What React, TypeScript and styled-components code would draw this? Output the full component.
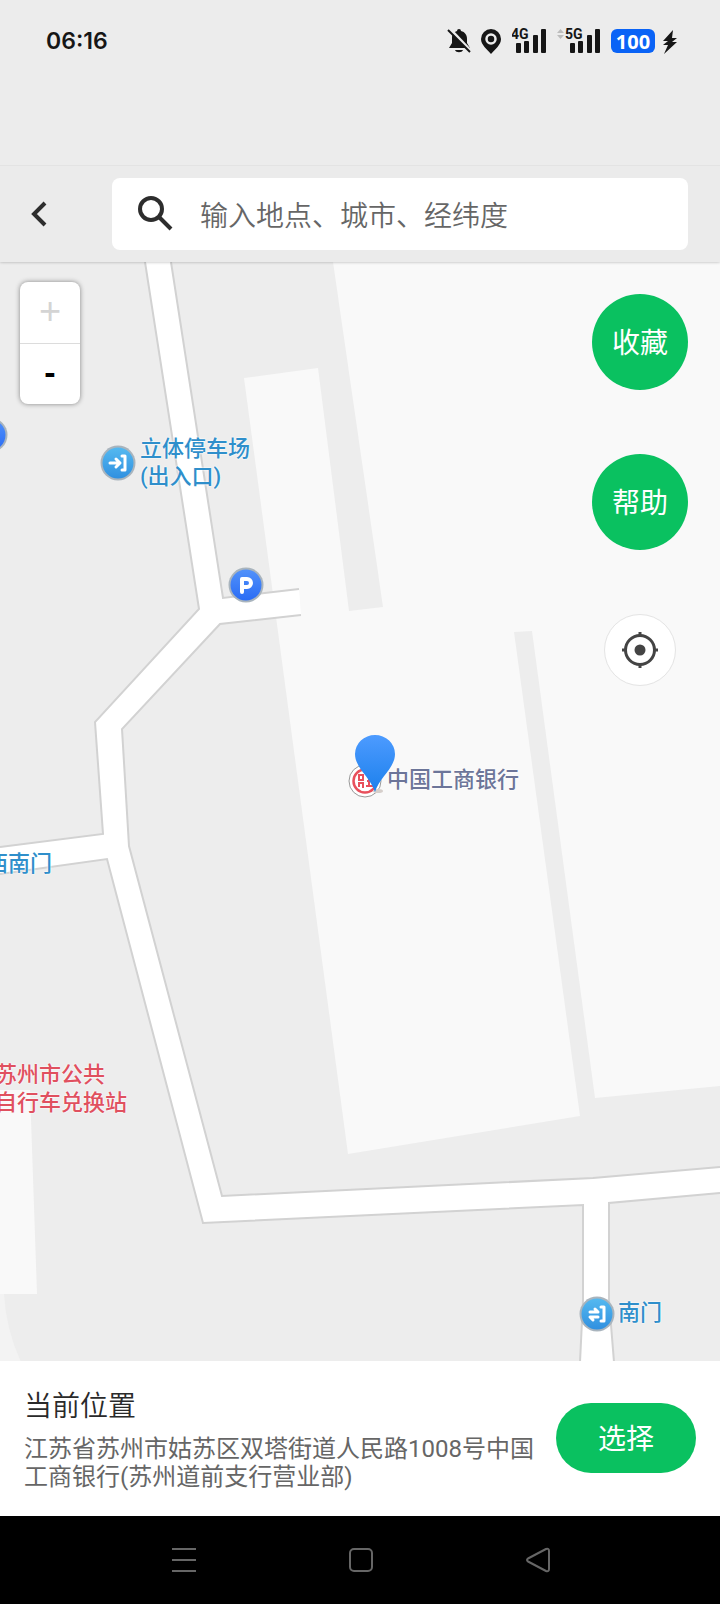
import React from "react";
import styled, { createGlobalStyle } from "styled-components";

const GlobalStyle = createGlobalStyle`
  * { box-sizing: border-box; }
  body {
    margin: 0;
    background: #ececec;
    font-family: Roboto, "Noto Sans CJK SC", sans-serif;
    -webkit-font-smoothing: antialiased;
  }
  button { font: inherit; border: 0; padding: 0; cursor: pointer; }
  svg { display: block; flex: none; }
`;

const Screen = styled.div`
  display: flex;
  flex-direction: column;
  min-height: 100vh;
`;

const StatusBar = styled.div`
  display: flex;
  justify-content: space-between;
  align-items: flex-start;
  height: 165px;
  padding: 24px 42px 0 46px;
  color: #161616;
`;

const Clock = styled.time`
  font: 600 23px/34px Inter, sans-serif;
`;

const StatusIcons = styled.div`
  display: flex;
  align-items: center;
  gap: 8px;
  height: 34px;
`;

const Battery = styled.span`
  width: 44px;
  height: 24px;
  border-radius: 6px;
  background: #0a63f6;
  color: #fff;
  text-align: center;
  font: 700 20px/26px "Open Sans", sans-serif;
`;

const Header = styled.header`
  position: relative;
  z-index: 1;
  display: flex;
  align-items: center;
  height: 97px;
  padding: 0 32px 0 20px;
  gap: 52px;
  background: #ebebeb;
  border-top: 1px solid #e3e3e3;
  box-shadow: 0 0 3px rgba(0, 0, 0, 0.3);
  clip-path: inset(0 0 -4px 0);
`;

const BackButton = styled.button`
  display: flex;
  align-items: center;
  justify-content: center;
  width: 40px;
  height: 40px;
  background: none;
`;

const SearchBox = styled.label`
  display: flex;
  flex: 1;
  align-items: center;
  gap: 24px;
  height: 72px;
  padding: 0 24px;
  border-radius: 8px;
  background: #fff;
`;

const SearchInput = styled.input`
  flex: 1;
  min-width: 0;
  height: 44px;
  padding: 4px 0 0;
  border: 0;
  outline: 0;
  background: none;
  color: #333;
  font: 350 28px/40px Roboto, "Noto Sans CJK SC", sans-serif;
  &::placeholder { color: #666; opacity: 1; }
`;

const MapArea = styled.main`
  position: relative;
  flex: 1;
  min-height: 1000px;
  overflow: hidden;
  background: #ededed;
`;

const MapDrawing = styled.svg`
  width: 100%;
  height: 100%;
  position: absolute;
  inset: 0;
`;

const Label = styled.div<{ $x: number; $y: number; $color: string }>`
  position: absolute;
  left: ${(p) => p.$x}px;
  top: ${(p) => p.$y}px;
  color: ${(p) => p.$color};
  font-size: 22px;
  font-weight: 500;
  line-height: 28px;
  white-space: nowrap;
  text-shadow: 0 0 2px #fff, 0 0 2px #fff;
`;

const ZoomControl = styled.div`
  position: absolute;
  left: 20px;
  top: 20px;
  display: flex;
  flex-direction: column;
  width: 60px;
  border-radius: 8px;
  background: #fff;
  box-shadow: 0 0 5px rgba(0, 0, 0, 0.45);
`;

const ZoomButton = styled.button`
  height: 61px;
  background: none;
  color: #000;
  font: 700 34px/56px "Liberation Sans", sans-serif;
  padding-bottom: 4px;
  & + & { border-top: 1px solid #dcdcdc; }
  &:disabled { color: #d4d4d4; font-size: 38px; font-weight: 400; }
`;

const MapActions = styled.div`
  position: absolute;
  right: 32px;
  top: 32px;
  display: flex;
  flex-direction: column;
  align-items: center;
  gap: 64px;
`;

const RoundButton = styled.button`
  width: 96px;
  height: 96px;
  padding-top: 4px;
  border-radius: 50%;
  background: #0ac160;
  color: #fff;
  font-size: 28px;
  line-height: 40px;
`;

const LocateButton = styled.button`
  display: flex;
  align-items: center;
  justify-content: center;
  width: 72px;
  height: 72px;
  border: 1px solid #e4e4e4;
  border-radius: 50%;
  background: #fff;
`;

const PlacePanel = styled.section`
  display: flex;
  align-items: center;
  gap: 20px;
  padding: 24px 24px 25px;
  background: #fff;
`;

const PlaceText = styled.div`
  display: flex;
  flex: 1;
  flex-direction: column;
  gap: 6px;
  min-width: 0;
`;

const PlaceTitle = styled.h1`
  margin: 0;
  color: #2a2a2a;
  font-size: 28px;
  font-weight: 350;
  line-height: 44px;
`;

const PlaceAddress = styled.p`
  margin: 0;
  color: #666;
  font-size: 24px;
  font-weight: 400;
  line-height: 28px;
`;

const SelectButton = styled.button`
  width: 140px;
  height: 70px;
  padding-top: 4px;
  border-radius: 35px;
  background: #0ac160;
  color: #fff;
  font-size: 28px;
  line-height: 40px;
`;

const SystemNav = styled.nav`
  display: flex;
  height: 88px;
  padding: 0 93px 0 95px;
  background: #000;
`;

const NavButton = styled.button`
  display: flex;
  flex: 1;
  align-items: center;
  justify-content: center;
  background: none;
`;

function Signal({ name, roaming }: { name: string; roaming?: boolean }) {
  const x = roaming ? 9 : 0;
  return (
    <svg width={roaming ? 46 : 37} height="28" viewBox={`0 0 ${roaming ? 46 : 37} 28`} fill="#161616">
      {roaming && <path d="M0 6 3.500 2 7 6ZM0 8h7l-3.500 4Z" fill="#bdbdbd" />}
      <text x={x - 1} y="12" fontFamily="Roboto, sans-serif" fontSize="14" fontWeight="700">{name}</text>
      <rect x={x + 4} y="16" width="5" height="10" rx="1" />
      <rect x={x + 12} y="14" width="5" height="12" rx="1" />
      <rect x={x + 21} y="8" width="5" height="18" rx="1" />
      <rect x={x + 29} y="2" width="5" height="24" rx="1" />
    </svg>
  );
}

type MarkerProps = { x: number; y: number; fill: string; children?: React.ReactNode };

function Marker({ x, y, fill, children }: MarkerProps) {
  return (
    <g transform={`translate(${x} ${y})`}>
      <circle r="17.500" fill="#a9b4bd" />
      <circle r="15.500" fill={`url(#${fill})`} />
      <g fill="none" stroke="#fff" strokeWidth="3" strokeLinecap="round" strokeLinejoin="round">{children}</g>
    </g>
  );
}

function CampusMap() {
  return (
    <MapDrawing viewBox="0 262 720 1099" preserveAspectRatio="xMinYMin slice" aria-hidden="true">
      <defs>
        <linearGradient id="gate" x2="0" y2="1"><stop stopColor="#55b9f0" /><stop offset="1" stopColor="#3090e0" /></linearGradient>
        <linearGradient id="parking" x2="0" y2="1"><stop stopColor="#5292fa" /><stop offset="1" stopColor="#2a6cf5" /></linearGradient>
        <linearGradient id="pin" x2="0" y2="1"><stop stopColor="#4d9bff" /><stop offset="1" stopColor="#1c80ec" /></linearGradient>
      </defs>

      <g fill="#f9f9f9">
        <path d="M333 262 383 607 349 611 318 368 244 378 348 1154 580 1116 514 632 532 631 595 1098 720 1086V262Z" />
        <path d="M0 1090H30L37 1294H0Z" />
      </g>
      <path d="M0 1294H4Q6 1330 21 1362H0Z" fill="#f3f3f3" />

      <path
        fill="#fff"
        d="M145 262H171L223 598 299 589 301 615 220 624 122 729 129 846 222 1196 593 1178 720 1167V1193L609 1203V1300L614 1362H580L583 1300V1205L203 1223 107 859 0 874V847L103 834 95 722 199 609Z"
      />
      <g fill="none" stroke="#d2d2d2" strokeWidth="2">
        <path d="M171 262 223 598 299 589" />
        <path d="M301 615 220 624 122 729 129 846 222 1196 593 1178 720 1167" />
        <path d="M720 1193 609 1203V1300L614 1362" />
        <path d="M580 1362 583 1300V1205L203 1223 107 859 0 874" />
        <path d="M0 847 103 834 95 722 199 609 145 262" />
      </g>

      <Marker x={-10} y={435} fill="parking" />
      <Marker x={118} y={463} fill="gate">
        <path d="M-8 0H1M-2 -4 2 0-2 4M4-7H7V7H4" />
      </Marker>
      <Marker x={246} y={585} fill="parking">
        <path d="M-4 7V-6H1A4 4 0 0 1 1 2H-3" strokeWidth="4" />
      </Marker>
      <Marker x={597} y={1314} fill="gate">
        <path d="M-7-2H1L-2-5M1 3H-7L-4 6M4-7H7V7H4" />
      </Marker>

      <g transform="translate(365 781)">
        <circle r="16" fill="#fff" stroke="#999" />
        <g fill="none" stroke="#e8505c">
          <circle r="11.500" strokeWidth="2.500" />
          <path d="M-1-6H-6V-1H-2V-6M-7 2H-2V7M-6 6V2M2-6H7M4-6V5M1 5H8M2 0H7" strokeWidth="2" />
        </g>
      </g>
      <ellipse cx="378" cy="791" rx="5" ry="2" fill="#d6cfcb" />
      <path d="M375 792C371 778 355 768 355 754A20 19 0 0 1 395 754C395 768 379 778 375 792Z" fill="url(#pin)" />
    </MapDrawing>
  );
}

export default function App() {
  return (
    <>
      <GlobalStyle />
      <Screen>
        <StatusBar>
          <Clock>06:16</Clock>
          <StatusIcons>
            <svg width="26" height="28" viewBox="0 0 26 28" fill="#161616">
              <path d="M13 2a2 2 0 0 1 2 2c4 1 6 4 6 8v4l3 5H3l3-5v-5c0-4 2-6 5-7a2 2 0 0 1 2-2ZM9 23h8c-1 3-7 3-8 0Z" />
              <path d="m3 1 22 23" stroke="#ececec" strokeWidth="3" />
              <path d="m2 3 22 22" stroke="#161616" strokeWidth="2" />
            </svg>
            <svg width="24" height="28" viewBox="0 0 24 28">
              <path d="M11 2A10 10 0 0 1 21 12C21 18 15 22 11 27 7 22 1 18 1 12A10 10 0 0 1 11 2Z" fill="#161616" />
              <circle cx="11" cy="12" r="4.500" fill="#161616" stroke="#ececec" strokeWidth="2.500" />
            </svg>
            <Signal name="4G" />
            <Signal name="5G" roaming />
            <Battery>100</Battery>
            <svg width="15" height="26" viewBox="0 0 15 26" fill="#161616">
              <path d="M10 2 0 13H5L0 17H5L1 26 14 14H9L14 10H9Z" />
            </svg>
          </StatusIcons>
        </StatusBar>

        <Header>
          <BackButton aria-label="返回">
            <svg width="18" height="26" viewBox="0 0 18 26" fill="none" stroke="#2d2d2d" strokeWidth="4">
              <path d="M14 2 3 13 14 24" />
            </svg>
          </BackButton>
          <SearchBox>
            <svg width="40" height="40" viewBox="0 0 40 40" fill="none" stroke="#2d2d2d" strokeWidth="4">
              <circle cx="15" cy="15" r="11" />
              <path d="m23 23 12 12" />
            </svg>
            <SearchInput type="text" aria-label="搜索" placeholder="输入地点、城市、经纬度" />
          </SearchBox>
        </Header>

        <MapArea>
          <CampusMap />
          <Label $x={140} $y={173} $color="#2f8fcb">立体停车场<br />(出入口)</Label>
          <Label $x={387} $y={504} $color="#6c7599">中国工商银行</Label>
          <Label $x={-14} $y={588} $color="#2f8fcb">西南门</Label>
          <Label $x={-5} $y={799} $color="#e0505f">苏州市公共<br />自行车兑换站</Label>
          <Label $x={618} $y={1037} $color="#2f8fcb">南门</Label>
          <ZoomControl>
            <ZoomButton disabled aria-label="放大">+</ZoomButton>
            <ZoomButton aria-label="缩小">-</ZoomButton>
          </ZoomControl>
          <MapActions>
            <RoundButton>收藏</RoundButton>
            <RoundButton>帮助</RoundButton>
            <LocateButton aria-label="定位">
              <svg width="38" height="38" viewBox="0 0 38 38" fill="none" stroke="#444" strokeWidth="3">
                <circle cx="19" cy="19" r="14.500" />
                <circle cx="19" cy="19" r="5.500" fill="#444" stroke="none" />
                <path d="M19 1V6M19 32V37M1 19H6M32 19H37" />
              </svg>
            </LocateButton>
          </MapActions>
        </MapArea>

        <PlacePanel>
          <PlaceText>
            <PlaceTitle>当前位置</PlaceTitle>
            <PlaceAddress>江苏省苏州市姑苏区双塔街道人民路1008号中国工商银行(苏州道前支行营业部)</PlaceAddress>
          </PlaceText>
          <SelectButton>选择</SelectButton>
        </PlacePanel>

        <SystemNav>
          <NavButton aria-label="最近任务">
            <svg width="26" height="26" viewBox="0 0 26 26" stroke="#666" strokeWidth="2">
              <path d="M1 2H25M1 13H25M1 24H25" />
            </svg>
          </NavButton>
          <NavButton aria-label="主屏幕">
            <svg width="26" height="26" viewBox="0 0 26 26" fill="none" stroke="#666" strokeWidth="2">
              <rect x="2" y="2" width="22" height="22" rx="4" />
            </svg>
          </NavButton>
          <NavButton aria-label="后退">
            <svg width="26" height="26" viewBox="0 0 26 26" fill="none" stroke="#666" strokeWidth="2" strokeLinejoin="round">
              <path d="M3 11.500 21 2Q24 1 24 4V22Q24 25 21 24L3 14.500Q1 13 3 11.500Z" />
            </svg>
          </NavButton>
        </SystemNav>
      </Screen>
    </>
  );
}
